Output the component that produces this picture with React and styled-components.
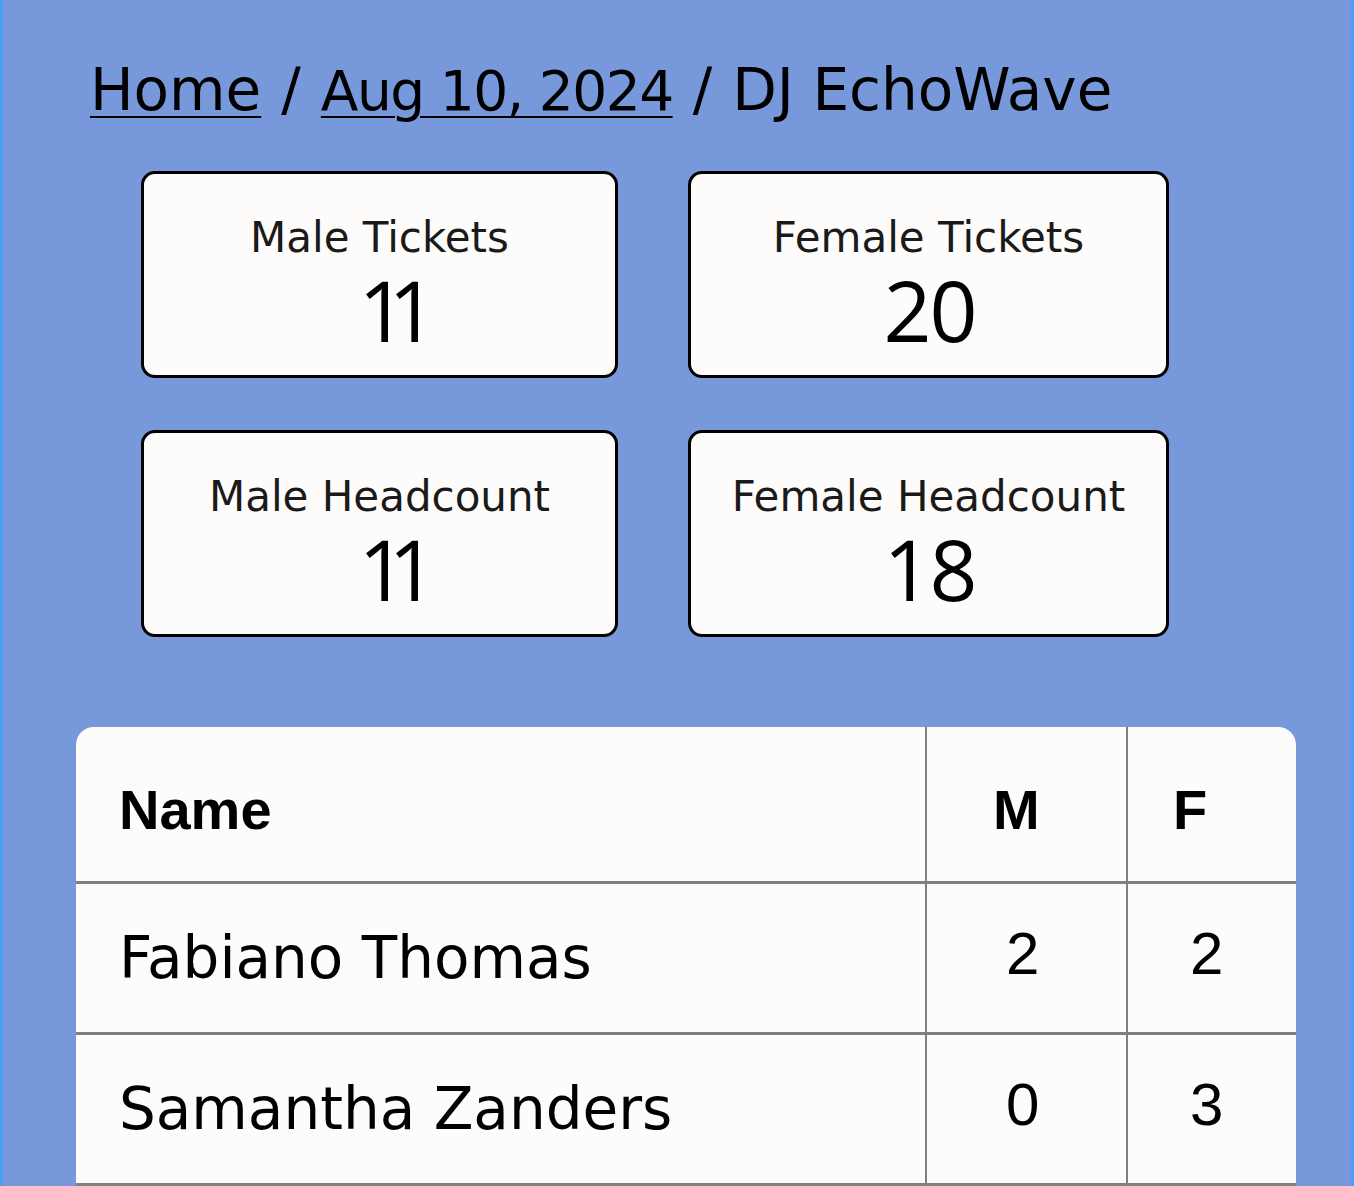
import React from "react";
import styled, { createGlobalStyle } from "styled-components";

const stats = [
  { label: "Male Tickets", value: 11 },
  { label: "Female Tickets", value: 20 },
  { label: "Male Headcount", value: 11 },
  { label: "Female Headcount", value: 18 },
];

const guests = [
  { name: "Fabiano Thomas", male: 2, female: 2 },
  { name: "Samantha Zanders", male: 0, female: 3 },
];

const GlobalStyle = createGlobalStyle`
  body {
    margin: 0;
    background-color: #4c9ff6;
  }
`;

const Page = styled.div`
  margin: 0 3px;
  min-height: 100vh;
  background-color: #7799db;
  padding: 56px 0 0 0;
  overflow: hidden;
  font-family: "DejaVu Sans", "Open Sans", sans-serif;
  color: #000;
`;

const Breadcrumb = styled.nav`
  margin-left: 87px;
  font-size: 58px;
  line-height: 68px;
  height: 68px;
  white-space: nowrap;
`;

const Crumb = styled.a`
  color: #000;
  text-decoration: underline;
  text-decoration-thickness: 2px;
  text-underline-offset: 6px;
  cursor: pointer;
`;

const DateCrumb = styled(Crumb)`
  font-size: 55px;
  letter-spacing: -1.5px;
`;

const Sep = styled.span`
  margin: 0 20px;
`;

const StatsGrid = styled.div`
  display: grid;
  grid-template-columns: 477px 481px;
  column-gap: 70px;
  row-gap: 52px;
  margin: 47px 0 0 138px;
`;

const StatCard = styled.div`
  box-sizing: border-box;
  height: 207px;
  border: 3px solid #000;
  border-radius: 14px;
  background-color: #fdfcfa;
  display: flex;
  flex-direction: column;
  align-items: center;
  padding-top: 39px;
`;

const StatLabel = styled.div`
  font-size: 42px;
  line-height: 50px;
  color: #1a1a1a;
  white-space: nowrap;
`;

const StatValue = styled.div`
  margin-top: 5px;
  font-family: "Open Sans", sans-serif;
  font-size: 84px;
  line-height: 84px;
  letter-spacing: ${(p) => (p.$narrow ? "-18px" : "-2px")};
  margin-right: ${(p) => (p.$narrow ? "-18px" : "-2px")};
`;

const Table = styled.div`
  width: 1220px;
  margin: 90px 0 0 73px;
  background-color: #fdfcfa;
  border-radius: 18px 18px 0 0;
`;

const Row = styled.div`
  display: grid;
  grid-template-columns: 849px 201px 170px;
  height: ${(p) => (p.$head ? "154px" : "148px")};
  border-bottom: 3px solid #808080;
`;

const Cell = styled.div`
  display: flex;
  align-items: center;
  padding-left: ${(p) => p.$pad}px;
  padding-top: ${(p) => p.$down || 0}px;
  padding-bottom: ${(p) => p.$up || 0}px;
  border-left: ${(p) => (p.$divided ? "2px solid #808080" : "none")};
  font-family: ${(p) =>
    p.$plain ? '"Liberation Sans", Arial, sans-serif' : '"DejaVu Sans", sans-serif'};
  font-size: ${(p) => p.$size}px;
  font-weight: ${(p) => (p.$bold ? 700 : 400)};
  white-space: nowrap;
`;

export default function App() {
  return (
    <>
      <GlobalStyle />
      <Page>
        <Breadcrumb>
          <Crumb>Home</Crumb>
          <Sep>/</Sep>
          <DateCrumb>Aug 10, 2024</DateCrumb>
          <Sep>/</Sep>
          <span>DJ EchoWave</span>
        </Breadcrumb>

        <StatsGrid>
          {stats.map((s) => (
            <StatCard key={s.label}>
              <StatLabel>{s.label}</StatLabel>
              <StatValue $narrow={s.value === 11}>{s.value}</StatValue>
            </StatCard>
          ))}
        </StatsGrid>

        <Table>
          <Row $head>
            <Cell $pad={43} $down={10} $plain $bold $size={56}>
              Name
            </Cell>
            <Cell $pad={66} $down={10} $divided $plain $bold $size={56}>
              M
            </Cell>
            <Cell $pad={45} $down={10} $divided $plain $bold $size={56}>
              F
            </Cell>
          </Row>
          {guests.map((g) => (
            <Row key={g.name}>
              <Cell $pad={43} $size={58}>
                {g.name}
              </Cell>
              <Cell $pad={79} $up={10} $divided $plain $size={60}>
                {g.male}
              </Cell>
              <Cell $pad={62} $up={10} $divided $plain $size={60}>
                {g.female}
              </Cell>
            </Row>
          ))}
        </Table>
      </Page>
    </>
  );
}
